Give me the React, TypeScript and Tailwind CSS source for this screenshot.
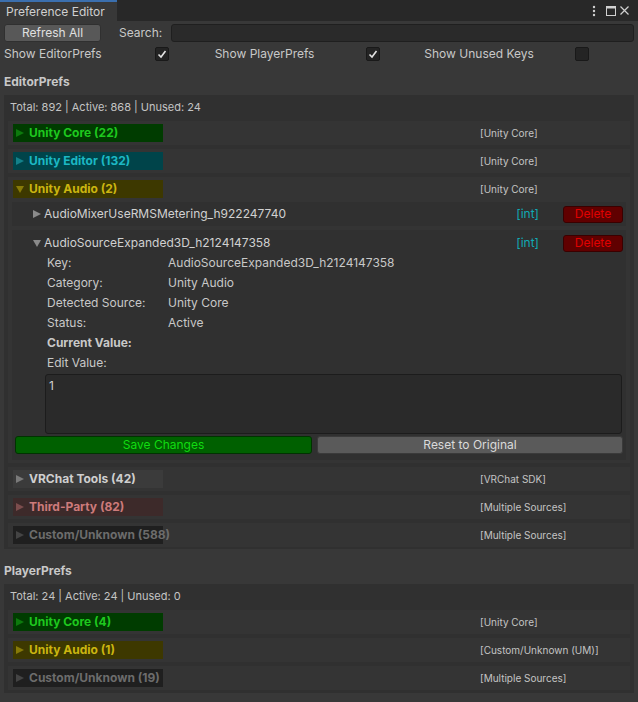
import React from 'react'

const font = "font-['Inter','Liberation_Sans',sans-serif]"

function Tri({ down = false, color }: { down?: boolean; color: string }) {
  return (
    <svg width="8" height="8" viewBox="0 0 8 8" className="shrink-0">
      {down ? <polygon points="0,1 8,1 4,8" fill={color} /> : <polygon points="0,0 8,4 0,8" fill={color} />}
    </svg>
  )
}

function Checkbox({ checked }: { checked: boolean }) {
  return (
    <div className="w-[14px] h-[14px] rounded-[2px] bg-[#242424] border border-[#191919] flex items-center justify-center">
      {checked && (
        <svg width="10" height="10" viewBox="0 0 10 10">
          <polyline points="1.5,5.5 4,8 8.5,2" fill="none" stroke="#e4e4e4" strokeWidth="1.6" />
        </svg>
      )}
    </div>
  )
}

type Cat = { bg: string; fg: string; tri: string }

const cats: Record<string, Cat> = {
  core: { bg: 'bg-[#003c00]', fg: 'text-[#1ec81e]', tri: '#0d7a0d' },
  editor: { bg: 'bg-[#00444a]', fg: 'text-[#1cb8c4]', tri: '#13818a' },
  audio: { bg: 'bg-[#3d3800]', fg: 'text-[#cbb510]', tri: '#877a08' },
  vrchat: { bg: 'bg-[#3b3b3b]', fg: 'text-[#cfcfcf]', tri: '#7a7a7a' },
  third: { bg: 'bg-[#3d2a2a]', fg: 'text-[#cd7b7b]', tri: '#7c4d4d' },
  custom: { bg: 'bg-[#1f1f1f]', fg: 'text-[#6c6c6c]', tri: '#444444' },
}

function CategoryRow({
  kind,
  label,
  source,
  open = false,
  children,
}: {
  kind: keyof typeof cats
  label: string
  source: string
  open?: boolean
  children?: React.ReactNode
}) {
  const c = cats[kind]
  return (
    <div className="bg-[#343434] pt-[3px] pb-[3px]">
      <div className="flex items-center h-[18px]">
        <div className="w-[472px] pl-[5px]">
          <div className={`w-[150px] h-[18px] flex items-center pl-[3px] ${c.bg}`}>
            <Tri down={open} color={c.tri} />
            <span className={`ml-[5px] text-[12px] font-bold whitespace-nowrap ${c.fg}`}>{label}</span>
          </div>
        </div>
        <span className="text-[10px] text-[#c4c4c4] whitespace-nowrap">{source}</span>
      </div>
      {children}
    </div>
  )
}

function EntryHeader({ name, open = false }: { name: string; open?: boolean }) {
  return (
    <div className="flex items-center h-[20px]">
      <div className="w-[490px] flex items-center pl-[21px]">
        <Tri down={open} color="#8a8a8a" />
        <span className="ml-[3px] text-[12px] text-[#d0d0d0] whitespace-nowrap">{name}</span>
      </div>
      <span className="w-[37px] text-right text-[12px] text-[#10aab4]">[int]</span>
      <button className="ml-[24px] w-[60px] h-[17px] rounded-[3px] bg-[#600000] border border-[#3a0000] text-[12px] text-[#e00000] leading-none">
        Delete
      </button>
    </div>
  )
}

function Detail({ label, value, bold = false }: { label: string; value?: string; bold?: boolean }) {
  return (
    <div className="flex items-center h-[20px] pl-[35px] text-[12px] text-[#c8c8c8]">
      <span className={`w-[121px] ${bold ? 'font-bold' : ''}`}>{label}</span>
      {value && <span>{value}</span>}
    </div>
  )
}

function Stats({ text }: { text: string }) {
  return <div className="h-[16px] flex items-center pl-[6px] text-[11px] text-[#c4c4c4]">{text}</div>
}

export default function App() {
  return (
    <div className={`w-[638px] h-[702px] overflow-hidden bg-[#383838] ${font} text-[#c8c8c8]`}>
      {/* tab bar */}
      <div className="h-[21px] bg-[#282828] flex items-stretch">
        <div className="w-[117px] bg-[#383838] border-t-2 border-[#3b6fae] flex items-center pl-[6px] text-[12px] text-[#d0d0d0]">
          Preference Editor
        </div>
        <div className="flex-1" />
        <div className="flex items-center pr-[9px]">
          <svg width="4" height="12" viewBox="0 0 4 12">
            <circle cx="2" cy="2" r="1.2" fill="#d0d0d0" />
            <circle cx="2" cy="6" r="1.2" fill="#d0d0d0" />
            <circle cx="2" cy="10" r="1.2" fill="#d0d0d0" />
          </svg>
          <svg width="10" height="10" viewBox="0 0 10 10" className="ml-[10px]">
            <rect x="0.5" y="0.5" width="9" height="9" fill="none" stroke="#d0d0d0" />
            <rect x="0.5" y="0.5" width="9" height="2" fill="#d0d0d0" />
          </svg>
          <svg width="9" height="9" viewBox="0 0 9 9" className="ml-[4px]">
            <path d="M0.5 0.5 L8.5 8.5 M8.5 0.5 L0.5 8.5" stroke="#d0d0d0" strokeWidth="1.2" />
          </svg>
        </div>
      </div>

      {/* toolbar */}
      <div className="mt-[3px] h-[18px] flex items-center px-[4px]">
        <button className="w-[97px] h-[18px] rounded-[3px] bg-[#585858] border border-[#303030] text-[12px] text-[#e0e0e0] leading-none">
          Refresh All
        </button>
        <span className="ml-[18px] w-[52px] text-[12px]">Search:</span>
        <div className="flex-1 h-[18px] rounded-[3px] bg-[#2a2a2a] border border-[#1f1f1f]" />
      </div>

      <div className="mt-[3px] h-[18px] flex items-center px-[4px] text-[12px]">
        <div className="w-[212px] flex items-center">
          <span className="w-[151px]">Show EditorPrefs</span>
          <Checkbox checked />
        </div>
        <div className="w-[211px] flex items-center">
          <span className="w-[151px]">Show PlayerPrefs</span>
          <Checkbox checked />
        </div>
        <div className="w-[211px] flex items-center">
          <span className="w-[151px]">Show Unused Keys</span>
          <Checkbox checked={false} />
        </div>
      </div>

      {/* EditorPrefs */}
      <div className="mt-[11px] h-[16px] flex items-center px-[4px] text-[12px] font-bold">EditorPrefs</div>
      <div className="mt-[5px] mx-[4px] bg-[#303030] pt-[4px] pb-[2px]">
        <Stats text="Total: 892 | Active: 868 | Unused: 24" />
        <div className="mt-[6px] px-[4px] flex flex-col gap-[4px]">
          <CategoryRow kind="core" label="Unity Core (22)" source="[Unity Core]" />
          <CategoryRow kind="editor" label="Unity Editor (132)" source="[Unity Core]" />
          <CategoryRow kind="audio" label="Unity Audio (2)" source="[Unity Core]" open>
            <div className="mt-[4px] px-[4px] flex flex-col gap-[4px]">
              <div className="bg-[#303030] pt-[2px] pb-[2px]">
                <EntryHeader name="AudioMixerUseRMSMetering_h922247740" />
              </div>
              <div className="bg-[#303030] pt-[3px] pb-[6px]">
                <EntryHeader name="AudioSourceExpanded3D_h2124147358" open />
                <Detail label="Key:" value="AudioSourceExpanded3D_h2124147358" />
                <Detail label="Category:" value="Unity Audio" />
                <Detail label="Detected Source:" value="Unity Core" />
                <Detail label="Status:" value="Active" />
                <Detail label="Current Value:" bold />
                <Detail label="Edit Value:" />
                <div className="mt-[1px] ml-[33px] w-[577px] h-[60px] rounded-[3px] bg-[#2a2a2a] border border-[#1c1c1c] px-[3px] pt-[2px] text-[12px] text-[#d0d0d0]">
                  1
                </div>
                <div className="mt-[2px] pl-[3px] flex gap-[5px]">
                  <button className="w-[297px] h-[18px] rounded-[3px] bg-[#006000] border border-[#003200] text-[12px] text-[#10dc10] leading-none">
                    Save Changes
                  </button>
                  <button className="w-[306px] h-[18px] rounded-[3px] bg-[#5a5a5a] border border-[#3a3a3a] text-[12px] text-[#dadada] leading-none">
                    Reset to Original
                  </button>
                </div>
              </div>
            </div>
          </CategoryRow>
          <CategoryRow kind="vrchat" label="VRChat Tools (42)" source="[VRChat SDK]" />
          <CategoryRow kind="third" label="Third-Party (82)" source="[Multiple Sources]" />
          <CategoryRow kind="custom" label="Custom/Unknown (588)" source="[Multiple Sources]" />
        </div>
      </div>

      {/* PlayerPrefs */}
      <div className="mt-[14px] h-[16px] flex items-center px-[4px] text-[12px] font-bold">PlayerPrefs</div>
      <div className="mt-[5px] mx-[4px] bg-[#303030] pt-[4px] pb-[3px]">
        <Stats text="Total: 24 | Active: 24 | Unused: 0" />
        <div className="mt-[6px] px-[4px] flex flex-col gap-[4px]">
          <CategoryRow kind="core" label="Unity Core (4)" source="[Unity Core]" />
          <CategoryRow kind="audio" label="Unity Audio (1)" source="[Custom/Unknown (UM)]" />
          <CategoryRow kind="custom" label="Custom/Unknown (19)" source="[Multiple Sources]" />
        </div>
      </div>
    </div>
  )
}
